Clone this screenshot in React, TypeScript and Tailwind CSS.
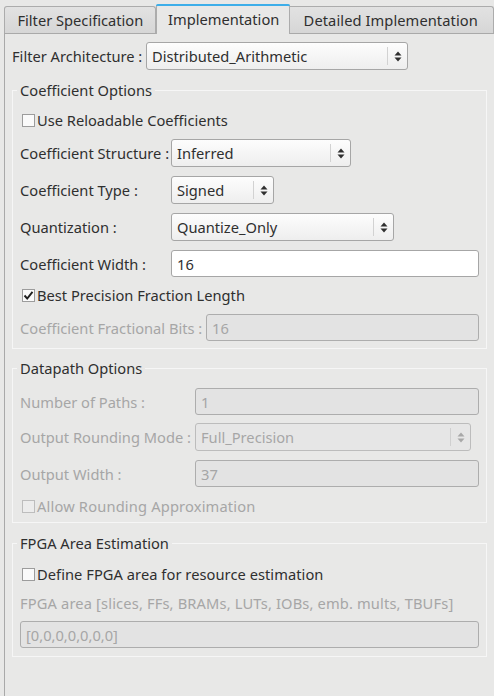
import React from "react";

const BG = "bg-[#e8e8e7]";

function Arrows({ disabled }: { disabled?: boolean }) {
  const c = disabled ? "#a8a8a8" : "#2f2f2f";
  return (
    <svg width="8" height="11" viewBox="0 0 8 11">
      <path d="M4 0.5 L7.5 4.5 L0.5 4.5 Z" fill={c} />
      <path d="M4 10.5 L7.5 6.5 L0.5 6.5 Z" fill={c} />
    </svg>
  );
}

function Combo({ value, w, disabled }: { value: string; w: string; disabled?: boolean }) {
  return (
    <div
      className={`${w} h-[28px] flex items-center rounded-[3px] border ${
        disabled
          ? "border-[#bcbcbc] bg-[#e6e6e6] text-[#a6a6a6]"
          : "border-[#a6a6a6] bg-gradient-to-b from-[#fdfdfd] to-[#eeeeee] text-[#2f2f2f]"
      }`}
    >
      <div className="flex-1 pl-[5px] leading-[20px] whitespace-nowrap overflow-hidden">{value}</div>
      <div className={`w-px h-[18px] ${disabled ? "bg-[#d0d0d0]" : "bg-[#d2d2d2]"}`} />
      <div className="w-[19px] flex items-center justify-center">
        <Arrows disabled={disabled} />
      </div>
    </div>
  );
}

function Field({ value, disabled, className = "" }: { value: string; disabled?: boolean; className?: string }) {
  return (
    <div
      className={`h-[27px] flex items-center rounded-[3px] border pl-[5px] leading-[20px] ${
        disabled ? "border-[#adadad] bg-[#e3e3e3] text-[#a6a6a6]" : "border-[#a6a6a6] bg-white text-[#2f2f2f]"
      } ${className}`}
    >
      {value}
    </div>
  );
}

function Check({ label, checked, disabled, className = "" }: { label: string; checked?: boolean; disabled?: boolean; className?: string }) {
  return (
    <div className={`h-[20px] flex items-center ${disabled ? "text-[#a6a6a6]" : "text-[#2f2f2f]"}`}>
      <div
        className={`ml-[2px] w-[13px] h-[13px] border flex items-center justify-center ${
          disabled ? "border-[#bdbdbd] bg-[#ececec]" : "border-[#9c9c9c] bg-[#fafafa]"
        }`}
      >
        {checked && (
          <svg width="11" height="11" viewBox="0 0 11 11">
            <path d="M1.5 5.5 L4.2 8.5 L9.5 1.8" stroke="#1f1f1f" strokeWidth="1.9" fill="none" />
          </svg>
        )}
      </div>
      <span className={`ml-[2px] leading-[20px] ${className}`}>{label}</span>
    </div>
  );
}

function Group({ title, children, className = "" }: { title: string; children: React.ReactNode; className?: string }) {
  return (
    <div className={`w-[475px] flex flex-col border border-[#f6f6f6] px-[7px] ${className}`}>
      <div className={`self-start -mt-[11px] -ml-[3px] px-[3px] leading-[20px] text-[#2f2f2f] ${BG}`}>{title}</div>
      {children}
    </div>
  );
}

function Row({ label, lw, disabled, children, className = "" }: { label: string; lw: string; disabled?: boolean; children: React.ReactNode; className?: string }) {
  return (
    <div className={`flex items-center ${className}`}>
      <div className={`${lw} shrink-0 leading-[20px] whitespace-nowrap ${disabled ? "text-[#a6a6a6]" : "text-[#2f2f2f]"}`}>{label}</div>
      {children}
    </div>
  );
}

export default function App() {
  return (
    <div
      className={`w-[494px] h-[696px] overflow-hidden ${BG} text-[14.67px] text-[#2f2f2f] flex flex-col`}
      style={{ fontFamily: '"Noto Sans", "DejaVu Sans", sans-serif' }}
    >
      {/* Tabs */}
      <div className="h-[33px] flex items-end pl-[4px] shrink-0">
        <div className="w-[153px] h-[27px] border border-b-0 border-[#acacac] rounded-t-[3px] bg-gradient-to-b from-[#e2e2e2] to-[#d6d6d6] flex items-center justify-center leading-[20px] text-[#2f2f2f] pl-[1px]">
          Filter Specification
        </div>
        <div className={`relative z-10 -mb-px w-[135px] h-[30px] border border-b-0 border-[#acacac] rounded-t-[3px] ${BG} flex flex-col`}>
          <div className="h-[2px] bg-[#3daee9] rounded-t-[2px] -mx-px -mt-px" />
          <div className="flex-1 flex items-center justify-center leading-[20px] pb-[3px] pl-[2px]">Implementation</div>
        </div>
        <div className="w-[206px] h-[27px] border border-b-0 border-l-0 border-[#acacac] rounded-tr-[3px] bg-gradient-to-b from-[#e2e2e2] to-[#d6d6d6] flex items-center pl-[14px] leading-[20px] text-[#2f2f2f] whitespace-nowrap tracking-[0.08px]">
          Detailed Implementation
        </div>
      </div>

      {/* Pane */}
      <div className="flex-1 ml-[4px] w-[492px] border-l border-t border-[#a9a9a9] px-[7px] flex flex-col">
        <div className="mt-[8px] flex items-center">
          <div className="w-[134px] leading-[20px] whitespace-nowrap">Filter Architecture :</div>
          <Combo value="Distributed_Arithmetic" w="w-[262px]" />
        </div>

        <Group title="Coefficient Options" className="mt-[20px] pb-[7px]">
          <div className="mt-[10px]">
            <Check label="Use Reloadable Coefficients" />
          </div>
          <Row label="Coefficient Structure :" lw="w-[151px]" className="mt-[9px]">
            <Combo value="Inferred" w="w-[180px]" />
          </Row>
          <Row label="Coefficient Type :" lw="w-[151px]" className="mt-[9px]">
            <Combo value="Signed" w="w-[103px]" />
          </Row>
          <Row label="Quantization :" lw="w-[151px]" className="mt-[9px]">
            <Combo value="Quantize_Only" w="w-[223px]" />
          </Row>
          <Row label="Coefficient Width :" lw="w-[151px]" className="mt-[9px]">
            <Field value="16" className="flex-1" />
          </Row>
          <div className="mt-[8px]">
            <Check label="Best Precision Fraction Length" checked />
          </div>
          <Row label="Coefficient Fractional Bits :" lw="w-[186px]" disabled className="mt-[9px]">
            <Field value="16" disabled className="flex-1" />
          </Row>
        </Group>

        <Group title="Datapath Options" className="mt-[19px] pb-[6px]">
          <Row label="Number of Paths :" lw="w-[175px]" disabled className="mt-[10px]">
            <Field value="1" disabled className="flex-1" />
          </Row>
          <Row label="Output Rounding Mode :" lw="w-[175px]" disabled className="mt-[8px]">
            <Combo value="Full_Precision" w="w-[276px]" disabled />
          </Row>
          <Row label="Output Width :" lw="w-[175px]" disabled className="mt-[9px]">
            <Field value="37" disabled className="flex-1" />
          </Row>
          <div className="mt-[9px]">
            <Check label="Allow Rounding Approximation" disabled className="tracking-[0.17px]" />
          </div>
        </Group>

        <Group title="FPGA Area Estimation" className="mt-[20px] pb-[8px]">
          <div className="mt-[11px]">
            <Check label="Define FPGA area for resource estimation" className="tracking-[0.05px]" />
          </div>
          <div className="mt-[9px] leading-[20px] text-[#a6a6a6] whitespace-nowrap tracking-[0.15px]">
            FPGA area [slices, FFs, BRAMs, LUTs, IOBs, emb. mults, TBUFs]
          </div>
          <Field value="[0,0,0,0,0,0,0]" disabled className="mt-[8px]" />
        </Group>
      </div>
    </div>
  );
}
